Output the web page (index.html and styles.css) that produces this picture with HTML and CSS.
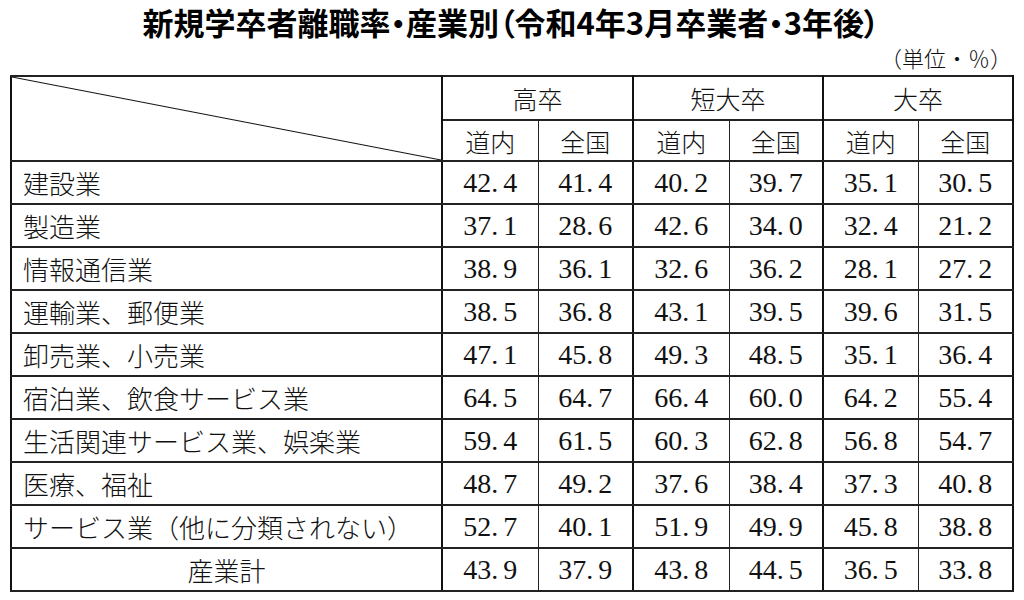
FILE: index.html
```html
<!DOCTYPE html>
<html lang="ja">
<head>
<meta charset="utf-8">
<title>新規学卒者離職率・産業別</title>
<link rel="stylesheet" href="styles.css">
</head>
<body>
<main class="page">
  <h1 class="title">新規学卒者離職率・産業別（令和4年3月卒業者・3年後）</h1>
  <p class="unit">（単位・％）</p>
  <table class="stats">
    <colgroup>
      <col class="c-label">
      <col class="c-a"><col class="c-b">
      <col class="c-a"><col class="c-c">
      <col class="c-b"><col class="c-b">
    </colgroup>
    <thead>
      <tr class="h1">
        <th class="corner" rowspan="2"></th>
        <th class="grp" colspan="2">高卒</th>
        <th class="grp" colspan="2">短大卒</th>
        <th class="grp" colspan="2">大卒</th>
      </tr>
      <tr class="h2">
        <th class="l">道内</th><th class="r">全国</th>
        <th class="l">道内</th><th class="r">全国</th>
        <th class="l">道内</th><th class="r">全国</th>
      </tr>
    </thead>
    <tbody>
      <tr><th class="name">建設業</th>
        <td class="l">42.<span class="d">4</span></td><td class="r">41.<span class="d">4</span></td>
        <td class="l">40.<span class="d">2</span></td><td class="r">39.<span class="d">7</span></td>
        <td class="l">35.<span class="d">1</span></td><td class="r">30.<span class="d">5</span></td></tr>
      <tr><th class="name">製造業</th>
        <td class="l">37.<span class="d">1</span></td><td class="r">28.<span class="d">6</span></td>
        <td class="l">42.<span class="d">6</span></td><td class="r">34.<span class="d">0</span></td>
        <td class="l">32.<span class="d">4</span></td><td class="r">21.<span class="d">2</span></td></tr>
      <tr><th class="name">情報通信業</th>
        <td class="l">38.<span class="d">9</span></td><td class="r">36.<span class="d">1</span></td>
        <td class="l">32.<span class="d">6</span></td><td class="r">36.<span class="d">2</span></td>
        <td class="l">28.<span class="d">1</span></td><td class="r">27.<span class="d">2</span></td></tr>
      <tr><th class="name">運輸業、郵便業</th>
        <td class="l">38.<span class="d">5</span></td><td class="r">36.<span class="d">8</span></td>
        <td class="l">43.<span class="d">1</span></td><td class="r">39.<span class="d">5</span></td>
        <td class="l">39.<span class="d">6</span></td><td class="r">31.<span class="d">5</span></td></tr>
      <tr><th class="name">卸売業、小売業</th>
        <td class="l">47.<span class="d">1</span></td><td class="r">45.<span class="d">8</span></td>
        <td class="l">49.<span class="d">3</span></td><td class="r">48.<span class="d">5</span></td>
        <td class="l">35.<span class="d">1</span></td><td class="r">36.<span class="d">4</span></td></tr>
      <tr><th class="name">宿泊業、飲食サービス業</th>
        <td class="l">64.<span class="d">5</span></td><td class="r">64.<span class="d">7</span></td>
        <td class="l">66.<span class="d">4</span></td><td class="r">60.<span class="d">0</span></td>
        <td class="l">64.<span class="d">2</span></td><td class="r">55.<span class="d">4</span></td></tr>
      <tr><th class="name">生活関連サービス業、娯楽業</th>
        <td class="l">59.<span class="d">4</span></td><td class="r">61.<span class="d">5</span></td>
        <td class="l">60.<span class="d">3</span></td><td class="r">62.<span class="d">8</span></td>
        <td class="l">56.<span class="d">8</span></td><td class="r">54.<span class="d">7</span></td></tr>
      <tr><th class="name">医療、福祉</th>
        <td class="l">48.<span class="d">7</span></td><td class="r">49.<span class="d">2</span></td>
        <td class="l">37.<span class="d">6</span></td><td class="r">38.<span class="d">4</span></td>
        <td class="l">37.<span class="d">3</span></td><td class="r">40.<span class="d">8</span></td></tr>
      <tr><th class="name">サービス業（他に分類されない）</th>
        <td class="l">52.<span class="d">7</span></td><td class="r">40.<span class="d">1</span></td>
        <td class="l">51.<span class="d">9</span></td><td class="r">49.<span class="d">9</span></td>
        <td class="l">45.<span class="d">8</span></td><td class="r">38.<span class="d">8</span></td></tr>
      <tr class="total"><th class="name sum">産業計</th>
        <td class="l">43.<span class="d">9</span></td><td class="r">37.<span class="d">9</span></td>
        <td class="l">43.<span class="d">8</span></td><td class="r">44.<span class="d">5</span></td>
        <td class="l">36.<span class="d">5</span></td><td class="r">33.<span class="d">8</span></td></tr>
    </tbody>
  </table>
</main>
</body>
</html>
```

FILE: styles.css
```css
html, body {
  margin: 0;
  padding: 0;
  background: #fff;
  color: #111;
}

.page {
  width: 1024px;
  padding: 0 12px 0 10px;
  box-sizing: border-box;
  display: flex;
  flex-direction: column;
}

.title {
  margin: 0;
  height: 44px;
  line-height: 43px;
  text-align: center;
  font-family: "Noto Sans CJK JP", sans-serif;
  font-weight: 700;
  font-size: 31px;
  font-feature-settings: "palt";
  letter-spacing: 0;
  color: #000;
}

.unit {
  margin: 0;
  height: 26px;
  line-height: 26px;
  text-align: right;
  font-family: "Noto Sans CJK JP", sans-serif;
  font-weight: 300;
  font-size: 22px;
  margin-bottom: 5px;
}

.stats {
  width: 1002px;
  table-layout: fixed;
  border-collapse: collapse;
  border: 2px solid #111;
  font-family: "Liberation Serif", "Noto Sans CJK JP", serif;
  font-weight: 300;
  font-size: 25px;
  color: #111;
}

.c-label { width: 431px; }
.c-a { width: 96px; }
.c-b { width: 95px; }
.c-c { width: 94px; }

.stats th,
.stats td {
  padding: 0;
  font-weight: 300;
  text-align: center;
  white-space: nowrap;
  border-top: 2px solid #222;
  border-bottom: 2px solid #222;
}

.stats .l { border-left: 2px solid #111; border-right: 1px solid #222; }
.stats .r { border-right: 2px solid #111; }

.h1 { height: 44px; }
.h2 { height: 41px; }
.h1 .grp {
  border-bottom: 1px solid #222;
  border-left: 2px solid #111;
  border-right: 2px solid #111;
  font-family: "Noto Sans CJK JP", serif;
}
.h2 th { font-family: "Noto Sans CJK JP", serif; }

.corner {
  border-right: 2px solid #111;
  background: linear-gradient(to top right,
    transparent calc(50% - 1px),
    #111 50%,
    transparent calc(50% + 1px));
}

tbody tr { height: 43px; }

.stats td {
  font-size: 28px;
  line-height: 1;
}

.d { margin-left: 0.18em; }

.stats .name {
  text-align: left;
  padding-left: 11px;
  font-family: "Noto Sans CJK JP", serif;
  font-size: 26px;
  border-right: 2px solid #111;
}

.stats .name.sum {
  text-align: center;
  padding-left: 0;
}
```
